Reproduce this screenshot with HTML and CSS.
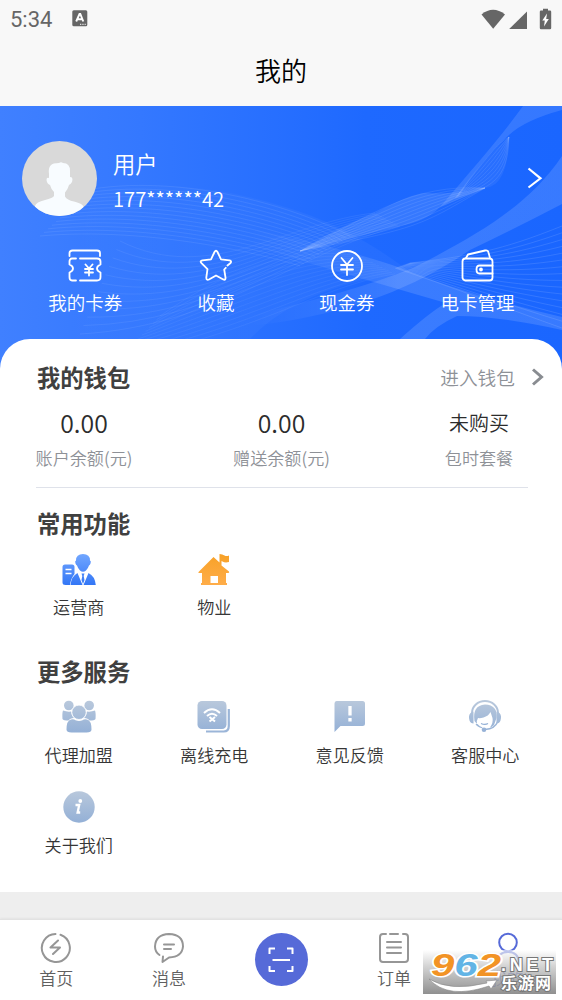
FILE: index.html
```
<!DOCTYPE html>
<html lang="zh-CN">
<head>
<meta charset="utf-8">
<title>我的</title>
<link rel="stylesheet" href="styles.css">
</head>
<body>
<div class="page">
  <header class="header">
    <div class="status">
      <div class="status-left">
        <span class="clock">5:34</span>
        <svg class="app-badge" width="16" height="17" viewBox="0 0 16 17"><rect x=".3" y=".3" width="15" height="16" rx="1.5" fill="#666"/><path d="M4.2 11.5 7.5 4h.8l3 7.5M5.6 9.3h4.5" fill="none" stroke="#fff" stroke-width="1.9"/><path d="M8 14.3h1.3m1 0h1.3m1 0h1.2" stroke="#ddd" stroke-width="1.3"/></svg>
      </div>
      <svg class="signals" width="72" height="22" viewBox="0 0 72 22" fill="#666">
        <path d="M1.500 6.500Q13 -2.800 25 6.500L13.200 20.800Z"/>
        <path d="M47 3.500V21H29.200Z"/>
        <path d="M61 2.500h2V.8h5v1.700h2a1.200 1.200 0 0 1 1.200 1.200V20a1.200 1.200 0 0 1-1.200 1.200h-9a1.200 1.200 0 0 1-1.200-1.200V3.700a1.200 1.200 0 0 1 1.200-1.200z"/>
        <path d="M67 5.500 62.300 12.600h2.500l-.8 6 4.800-7.600h-2.600z" fill="#fff"/>
      </svg>
    </div>
    <h1 class="title">我的</h1>
  </header>

  <section class="hero">
    <svg class="waves" width="562" height="262" viewBox="0 0 562 262" aria-hidden="true">
      <defs>
        <linearGradient id="fade" gradientUnits="userSpaceOnUse" x1="250" y1="0" x2="400" y2="0"><stop stop-color="#fff" stop-opacity="0"/><stop offset="1" stop-color="#fff"/></linearGradient>
        <linearGradient id="fade-left" gradientUnits="userSpaceOnUse" x1="60" y1="0" x2="300" y2="0"><stop stop-color="#fff" stop-opacity="0"/><stop offset="1" stop-color="#fff"/></linearGradient>
      </defs>
      <g fill="#fff">
        <path opacity=".12" d="M523 0C500 32 475 60 440 101L459 90Q480 55 509 29Q525 14 562 4V0Z"/>
        <path opacity=".06" d="M459 87Q480 55 509 31Q508 80 485 82Z"/>
        <path opacity=".11" d="M440 101Q425 116 400 120L300 145Q330 125 375 107Q410 88 425 87Q455 89 485 82Z"/>
        <path opacity=".13" d="M562 50C530 98 480 128 413 162Q345 189 230 214V222C350 212 420 178 470 144Q520 120 562 98Z" style="fill:url(#fade)"/>
        <path opacity=".13" d="M200 112Q330 138 395 160Q470 190 562 211V224Q500 210 457 210Q435 220 425 233H400Q430 206 446 197Q380 178 200 125Z" style="fill:url(#fade)"/>
        <path opacity=".035" d="M92 85Q190 70 285 101Q350 120 410 166Q300 180 250 233H60Z" style="fill:url(#fade-left)"/>
      </g>
      <g id="wave-lines" fill="none" stroke="#fff" stroke-width=".9"></g>
    </svg>
    <div class="profile">
      <svg class="avatar" width="75" height="75" viewBox="0 0 75 75">
        <clipPath id="face"><circle cx="37.500" cy="37.500" r="37.500"/></clipPath>
        <g clip-path="url(#face)"><rect width="75" height="75" fill="#d9d9d9"/>
        <path d="M27 33C26 25 29 22 37 22q2-1.500 4 0 7 0 7 8V36q3.500 0 2 5-1 2-3 3-1 4-4 7.500v4q2 3.500 9 5 9 2 10 6V75H13V65q1-4 10-6 8-2 9-4v-4q-3-3-4-7-3-1-3.500-5 0-3 2.500-2z" fill="#f8fcff"/></g>
      </svg>
      <div class="identity"><div class="name">用户</div><div class="phone">177******42</div></div>
      <svg class="go" width="18" height="24" viewBox="0 0 18 24"><path d="m2.500 2.500 12 9.800-12 9.200" fill="none" stroke="#fff" stroke-width="2.200"/></svg>
    </div>
    <nav class="actions">
      <a class="action"><svg width="34" height="34" viewBox="0 0 34 34"><path d="M1.500 7V4q0-2.500 3-2.500H29q3 0 3 2.500v3M12 9.500H29q3.500 0 3.500 3v3q-3.500 1.500-3.500 4t3.500 4V28q0 3.500-3.500 3.500H12M8 9.500H4q-2.500 0-2.500 3v3Q5 17 5 19.500t-3.500 4V28Q1.500 31.500 4 31.500h4M17.500 15.500l3.500 4 3.500-4M17 20h8M17 23.500h8M21 19.500V26.500"/></svg><span>我的卡券</span></a>
      <a class="action"><svg width="34" height="34" viewBox="0 0 34 34"><path d="m28.500 16.500 3-2.500q1.500-2-1-2.600L22 10.300 18.500 3q-1.500-2.500-3 0L12 10.300l-8.500 1.100q-3 .6-1 2.800l6 6-1.200 8.300q0 3.200 2.700 2L17 26.500l7.300 4q2.500 1 2.200-2l-1.300-8 1.600-1.700"/></svg><span>收藏</span></a>
      <a class="action"><svg width="34" height="34" viewBox="0 0 34 34"><circle cx="17" cy="17" r="15"/><path d="m11.500 9 5.500 6.500L22.500 9M11 16h12M11 20.500h12M17 15.500V26"/></svg><span>现金券</span></a>
      <a class="action"><svg width="34" height="34" viewBox="0 0 34 34"><rect x="1.500" y="9.500" width="30" height="22" rx="3"/><path d="m5 9 2-3.500 17-4q3-.5 3.500 2L29 9M31.500 16.500h-13q-3 0-3 4t3 4h13"/><circle cx="20" cy="20.500" r="1" fill="#fff"/></svg><span>电卡管理</span></a>
    </nav>
  </section>

  <main class="card">
    <div class="card-head"><h2>我的钱包</h2><a class="enter"><span>进入钱包</span><svg width="14" height="20" viewBox="0 0 14 20"><path d="m2 2.500 8.500 7.500L2 17.500" fill="none" stroke="#898c91" stroke-width="3"/></svg></a></div>
    <div class="wallet">
      <div><div class="amount">0.00</div><div class="caption">账户余额(元)</div></div>
      <div><div class="amount">0.00</div><div class="caption">赠送余额(元)</div></div>
      <div><div class="amount state">未购买</div><div class="caption">包时套餐</div></div>
    </div>
    <hr class="rule">
    <h2 class="section-title">常用功能</h2>
    <div class="grid">
      <a class="item"><svg width="34" height="34" viewBox="0 0 34 34">
        <defs><linearGradient id="blue" gradientUnits="userSpaceOnUse" x1="0" y1="0" x2="0" y2="34"><stop stop-color="#74a8ff"/><stop offset="1" stop-color="#2f73f5"/></linearGradient></defs>
        <path fill="url(#blue)" d="M3 11.500H10q2.500 0 2.500 2.500V21q-3.500 4-4.500 11H3.500Q.5 32 .5 29.500V14q0-2.500 2.500-2.500z"/>
        <path d="M3.500 16.500h6M3.500 20.500h6" stroke="#fff" stroke-width="1.500"/>
        <path fill="url(#blue)" d="M21 1q7 0 7 6.500 1.500.5.500 3-.5 1.500-1.500 2-1 3-3 5-3 2.500-6 0-2-2-3-5-1-.5-1.500-2-1-2.500.5-3Q14 1 21 1zM15.500 20l5 12h-12q1-9 7-12zM26.500 20l-5 12h12.300q-1-9-7.300-12zM19.500 20.500h3l-.8 2.500.8 4-1.500 4-1.500-4 .8-4z"/></svg><span>运营商</span></a>
      <a class="item"><svg width="34" height="34" viewBox="0 0 34 34">
        <defs><linearGradient id="orange" x2="0" y2="1"><stop stop-color="#f7a127"/><stop offset="1" stop-color="#ffad49"/></linearGradient></defs>
        <path fill="url(#orange)" fill-rule="evenodd" d="M22.500 1q3 0 5 1.500 2 1 4.500 0v6.500q-4 1-6.500-.5L24.500 8v4.500l7.500 6q.8 1.500-1 1.500h-2v10h1v2H4v-2h1V20H2.500q-2 0-.5-1.500L16.500 4l6 5.500zM13.500 23v7H21v-7z"/></svg><span>物业</span></a>
    </div>
    <h2 class="section-title more">更多服务</h2>
    <div class="grid services">
      <a class="item"><svg width="34" height="34" viewBox="0 0 34 34">
        <defs><linearGradient id="steel" gradientUnits="userSpaceOnUse" x1="0" y1="0" x2="0" y2="34"><stop stop-color="#bac9dc"/><stop offset="1" stop-color="#92afd6"/></linearGradient></defs>
        <g fill="url(#steel)"><circle cx="6.800" cy="5.500" r="4.800"/><circle cx="27.200" cy="5.500" r="4.800"/><path d="M1 10.500q4 1.500 8 1 1 5 3 6.500-4 0-5.500 2.500-5 0-6-1.500Q0 13 1 10.500zM33 10.500q-4 1.500-8 1-1 5-3 6.500 4 0 5.500 2.500 5 0 6-1.500Q34 13 33 10.500z"/><circle cx="17" cy="12.300" r="7.200" stroke="#fff" stroke-width=".8"/><path d="M9 19.500q3-.5 4.500.7 3.500 1.500 7 0 1.500-1.200 4.500-.7 4.500 1 4.500 10 0 3-5 3h-15q-5 0-5-3 0-9 4.500-10z"/></g></svg><span>代理加盟</span></a>
      <a class="item"><svg width="34" height="34" viewBox="0 0 34 34"><rect x=".5" y="1" width="29" height="28" rx="4.500" fill="url(#steel)"/><path d="M31.800 9v17q0 5.500-5 5.500H9" fill="none" stroke="#9bb5d8" stroke-width="2.200"/><path d="M7 13q8-7.500 16 0M10 16q5-4.500 10 0" fill="none" stroke="#fff" stroke-width="2"/><path d="m12.500 17 5.500 4.500m0-4.500L12.500 21.500" stroke="#fff" stroke-width="2"/></svg><span>离线充电</span></a>
      <a class="item"><svg width="34" height="34" viewBox="0 0 34 34"><path fill="url(#steel)" d="M3.500 1h26q2.500 0 2.500 2.500v20q0 2.500-2.500 2.500H7.500L1.500 32V3.500Q1.500 1 3.500 1z"/><path d="M17 6v9.500M17 18v3.500" stroke="#fff" stroke-width="3.300"/></svg><span>意见反馈</span></a>
      <a class="item"><svg width="34" height="34" viewBox="0 0 34 34"><g fill="none" stroke="url(#steel)"><path d="M4 13a13 12 0 0 1 26 0" stroke-width="2"/><path d="M30 21q-3 8-13 8.500" stroke-width="1.500"/></g><g fill="url(#steel)"><path d="M5.500 11.500v12q-3 0-4-3-1.500-5 1-7.500zM28.500 11.500v12q3 0 4-3 1.500-5-1-7.500z"/><path d="M6.500 21Q4 5.500 17 4.500 30 5 28.500 18l-2.500 7q-2 2-4 2.500 3.500-5 2.500-9.500l-2-6q-2 4-7 5.500-3.500 1-5.500.500-1.500 2-1 6z"/><circle cx="16" cy="29.700" r="2.300"/><path d="M9.500 24q2.500 3 5 3.500l-.5.800q-5-1.300-6.500-4.300z"/></g><path d="M13 23.500q4 1.800 7 0" fill="none" stroke="#92afd6" stroke-width="1.300"/></svg><span>客服中心</span></a>
      <a class="item"><svg width="34" height="34" viewBox="0 0 34 34"><circle cx="17" cy="17" r="15.700" fill="url(#steel)"/><circle cx="18.300" cy="11" r="1.900" fill="#fff"/><path d="M13.500 15h3.700L15.600 22.500h2.600" fill="none" stroke="#fff" stroke-width="2.300"/></svg><span>关于我们</span></a>
    </div>
  </main>

  <footer class="tabs">
    <a class="tab"><svg width="32" height="32" viewBox="0 0 32 32"><path d="M15.500 2A14 14 0 1 0 20.500 2.800M18 8.500l-7.500 7H20L13 22"/></svg><span>首页</span></a>
    <a class="tab"><svg width="32" height="32" viewBox="0 0 32 32"><path d="M6.500 23Q2 20 2 14.500 2.500 2.500 16 2q14 .5 14 12.500-1 10.500-14 11L9.500 30l.5-5.500M11 12.500h10M11 17h7"/></svg><span>消息</span></a>
    <a class="tab"><span class="scan"><svg width="28" height="28" viewBox="0 0 28 28"><path d="M2.500 8V2.500H8M20 2.500h5.500V8M2.500 20v5H8M20 25h5.500v-5M5.500 14H23"/></svg></span></a>
    <a class="tab"><svg width="32" height="32" viewBox="0 0 32 32"><path d="M8 2H5Q2 2 2 5v22q0 3 3 3h22q3 0 3-3V5q0-3-3-3h-2M12 2h8M9 10h14M9 15.500h14M9 21h14"/></svg><span>订单</span></a>
    <a class="tab active"><svg width="32" height="32" viewBox="0 0 32 32"><circle cx="17" cy="10.500" r="8.800"/><path d="M6 30q1-10 11-10t11 10"/></svg><span>我的</span></a>
    <div class="watermark">
      <svg width="133" height="44" viewBox="0 0 133 44">
        <path d="M6 29Q27 42 64 33l-1-2 11-1-6 9-2-3Q25 50 6 29z" fill="#fff" stroke="#888" stroke-width=".6"/>
        <g class="brand">
          <text x="8" y="26" textLength="70" lengthAdjust="spacingAndGlyphs"><tspan fill="#f29325">9</tspan><tspan fill="#62b4e5">6</tspan><tspan fill="#f29325">2</tspan></text>
        </g>
        <text class="net" x="78" y="21" textLength="52">.NET</text>
        <text class="site" x="78" y="39" textLength="50">乐游网</text>
      </svg>
    </div>
  </footer>
</div>
<script src="waves.js"></script>
</body>
</html>
```
FILE: styles.css
```
* { box-sizing: border-box; }
body { margin: 0; font-family: "Noto Sans CJK SC", "Noto Sans", sans-serif; font-weight: 350; color: #333; }
h1, h2 { margin: 0; }
svg { display: block; flex: none; }
.page { width: 562px; height: 1000px; overflow: hidden; display: flex; flex-direction: column; background: #eee; }

.header { height: 106px; background: #f8f8f8; flex: none; }
.status { display: flex; justify-content: space-between; height: 38px; padding: 8px 10px 0; }
.status-left { display: flex; gap: 20px; }
.clock { font: 22px/24px Roboto, sans-serif; color: #666; width: 42px; }
.app-badge { margin-top: 2px; }
.title { font-size: 26px; font-weight: 350; line-height: 38px; margin-top: 13px; text-align: center; color: #000; }

.hero { display: flow-root; position: relative; height: 272px; flex: none; background: linear-gradient(90deg, #4080ff 0%, #3478ff 25%, #1e69ff 65%, #1a66ff 100%); color: #fff; }
.waves { position: absolute; inset: 0; }
.profile { position: relative; display: flex; align-items: center; height: 75px; margin-top: 35px; padding: 0 18px 0 22px; }
.identity { margin: 7px 0 0 16px; flex: 1; }
.name { font-size: 22.300px; line-height: 34px; }
.phone { font-size: 20.200px; line-height: 38px; }
.go { margin-top: -1px; }
.actions { position: relative; display: grid; grid-template-columns: repeat(4, 1fr); padding: 33px 19px 0 20px; }
.action { display: flex; flex-direction: column; align-items: center; font-size: 18.500px; line-height: 26px; gap: 6px; white-space: nowrap; }
.action svg { fill: none; stroke: #fff; stroke-width: 1.8; stroke-linecap: round; stroke-linejoin: round; }

.card { position: relative; margin-top: -39px; height: 553px; flex: none; background: #fff; border-radius: 30px 30px 0 0; padding-top: 20px; }
h2 { font-size: 23.300px; line-height: 36px; font-weight: 700; color: #404040; }
.card-head { display: flex; justify-content: space-between; padding: 0 17px 0 37px; }
.enter { display: flex; align-items: center; gap: 16px; font-size: 18.700px; line-height: 30px; color: #8e9197; margin-top: -1px; }
.wallet { display: grid; grid-template-columns: 168px 227px 168px; text-align: center; padding-top: 9px; }
.amount { font-size: 24.800px; line-height: 36px; color: #2c2c2c; }
.state { font-size: 20px; padding-top: 1px; line-height: 35px; }
.caption { font-size: 17.100px; line-height: 26px; margin-top: 5px; color: #8e9197; }
.rule { width: 492px; margin: 16px 0 0 36px; border: 0; border-top: 1px solid #dfe2ea; }
.section-title { margin: 17px 0 0 37px; }
.grid { display: grid; grid-template-columns: repeat(4, 135.5px); padding: 12px 0 0 11px; row-gap: 22px; }
.item { display: flex; flex-direction: column; align-items: center; gap: 6px; font-size: 17.100px; line-height: 27px; color: #363636; }
.services { padding-top: 11px; }
.services .item { gap: 7px; }
.more { margin-top: 33px; }

.tabs { position: relative; margin-top: 27px; height: 81px; flex: none; background: #fff; border-top: 1px solid #e2e2e2; display: grid; grid-template-columns: repeat(5, 112.6px); padding-top: 12px; box-shadow: 0 -1px 2px #0000000c; }
.tab { display: flex; flex-direction: column; align-items: center; gap: 1px; font-size: 17px; line-height: 26px; color: #606060; }
.tab svg { fill: none; stroke: #969696; stroke-width: 2; stroke-linecap: round; stroke-linejoin: round; }
.scan { width: 53px; height: 53px; margin-top: 1px; border-radius: 50%; background: #566ad8; display: flex; align-items: center; justify-content: center; }
.scan svg { stroke: #fff; stroke-linecap: butt; }
.active { color: #566ad8; }
.active svg { stroke: #566ad8; }
.watermark { position: absolute; right: 6px; bottom: 6px; width: 133px; height: 44px; background: linear-gradient(#ffffffa0, #c8c8c8c0 35%, #858585e8); }
.tabs .watermark svg { stroke: none; overflow: visible; }
.brand { font: italic 700 31px "Liberation Sans", sans-serif; stroke: #fff; stroke-width: 3px; paint-order: stroke; }
.net { font: 700 18px "Liberation Sans", sans-serif; fill: #fff; stroke: #777; stroke-width: 2px; paint-order: stroke; }
.site { font-size: 16px; font-weight: 700; fill: #fff; stroke: #777; stroke-width: 2px; paint-order: stroke; }
```
FILE: waves.js
```
// Each band blends one cubic curve into another: [start, end, line count, opacity].
const bands = [
  [[92, 83, 190, 68, 300, 103, 350, 130], [40, 130, 150, 120, 270, 150, 300, 160], 14, 0.09],
  [[120, 135, 210, 180, 290, 115, 375, 107], [80, 228, 220, 220, 300, 145, 400, 120], 12, 0.08],
  [[459, 87, 475, 68, 495, 38, 509, 31], [455, 92, 490, 82, 508, 75, 509, 31], 8, 0.1],
  [[300, 145, 375, 108, 410, 78, 485, 82], [300, 145, 420, 122, 420, 120, 485, 82], 9, 0.1],
  [[562, 120, 500, 145, 470, 150, 410, 157], [562, 222, 500, 200, 450, 180, 395, 162], 16, 0.13],
  [[160, 210, 230, 160, 300, 140, 360, 150], [120, 252, 250, 230, 320, 180, 395, 168], 12, 0.06],
];

const group = document.getElementById("wave-lines");
for (const [from, to, count, opacity] of bands) {
  for (let i = 0; i < count; i++) {
    const t = i / (count - 1);
    const p = from.map((v, k) => (v + (to[k] - v) * t).toFixed(1));
    const path = document.createElementNS("http://www.w3.org/2000/svg", "path");
    path.setAttribute("d", `M${p[0]} ${p[1]}C${p.slice(2).join(" ")}`);
    path.setAttribute("opacity", opacity);
    group.appendChild(path);
  }
}
```
